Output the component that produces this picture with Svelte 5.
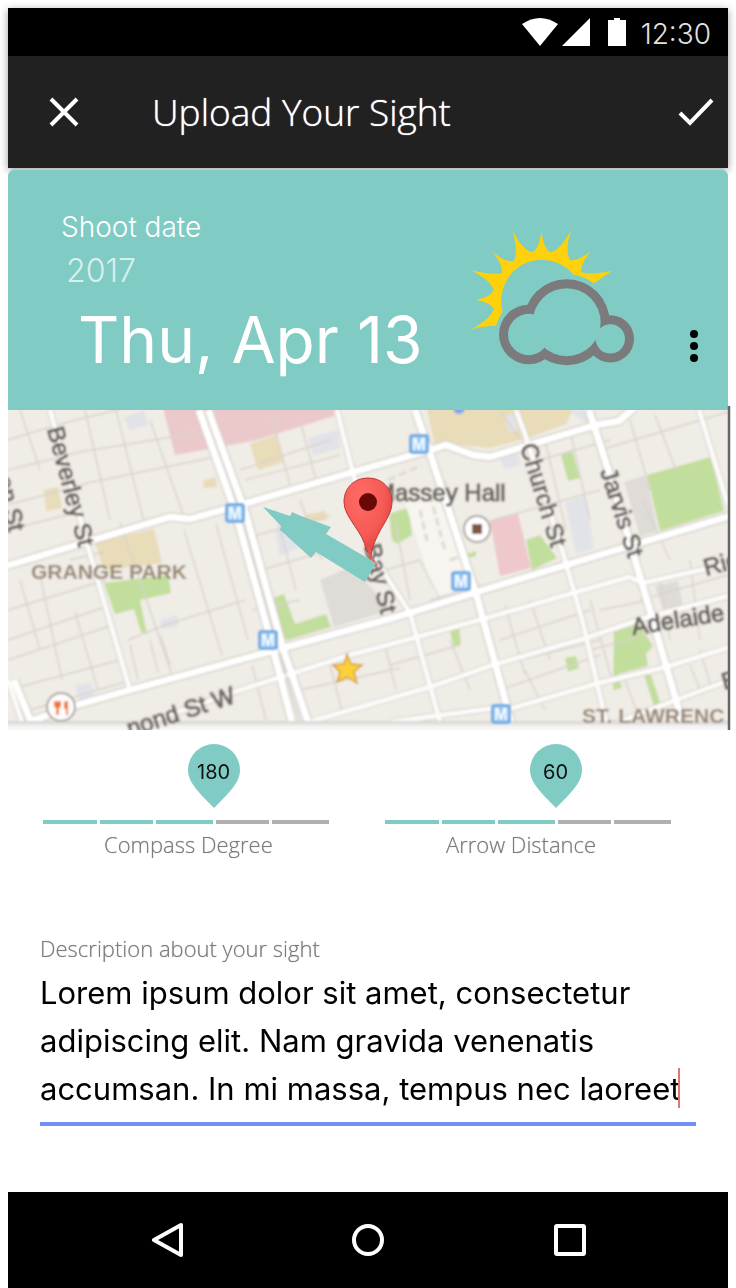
<script>
  let description = $state('Lorem ipsum dolor sit amet, consectetur adipiscing elit. Nam gravida venenatis accumsan. In mi massa, tempus nec laoreet');

  let sliders = $state([
    { id: 'compass', label: 'Compass Degree', value: 180, max: 300 },
    { id: 'distance', label: 'Arrow Distance', value: 60, max: 100 }
  ]);

  const segments = [1, 2, 3, 4, 5];

  // Streets, widest last so that they lie over the lanes
  const lanes = [
    'M8 440L60 424L230 382M8 470L80 452L215 430M8 505L92 482L225 455M8 530L70 514M8 610L106 580M8 640L108 606M8 660L110 626M8 690L120 660M30 710L125 682',
    'M85 410L110 520M116 410L144 522M20 410L40 470M20 580L40 650M40 575L62 680M75 612L98 690M120 522L150 610L172 675M150 420L184 517M184 530L222 655M216 524L248 640M128 640L165 625L245 600',
    'M70 560L104 552M130 645L138 680M150 640L158 672M160 635L170 665M270 410L290 485M300 420L316 480M245 480L340 455M240 470L330 440M250 537L330 515M262 570L345 545M275 510L296 590M300 500L322 560M395 520L410 600M385 570L420 560M252 610L300 600',
    'M252 665L266 720M330 665L343 715M385 645L396 690M300 690L400 668M430 600L480 585M420 560L440 600M450 640L470 690M390 665L460 645M500 410L520 440M545 440L566 530M570 430L590 520M493 520L600 490M540 460L610 440M630 420L650 490M655 415L676 470M600 450L728 412M642 500L670 560',
    'M505 605L525 675M530 600L550 660M500 640L590 610M520 660L600 640M525 670L545 710M600 610L650 600M590 650L655 632M660 580L670 640M690 560L700 640M640 600L728 575M690 665L702 695M625 680L640 720M700 650L712 690M660 540L728 520M590 600L612 680M500 690L600 655'
  ];
  const minor = [
    'M50 410L88 547L130 690',
    'M130 729L240 690L350 655L417 637L490 617L573 593L629 577L643 583L728 564',
    'M312 721L430 687L493 665L586 638L645 618L728 596',
    'M506 710L599 683L666 667L730 647',
    'M600 729L676 700L730 680',
    'M337 410L353 473L376 560L410 613L440 722',
    'M516 410L526 437L563 553L583 623L606 722',
    'M699 410L728 505',
    'M8 680L22 722',
    'M390 722L510 706'
  ];
  const major = [
    'M6 566L93 540L170 517L190 519L240 505L350 473L430 450L446 445L473 455L490 457L529 445L596 425L619 421L634 408',
    'M28 722L77 705L130 690L250 657L393 618L490 588L566 565L640 543L730 516',
    'M199 410L236 514L272 645L292 722',
    'M208 410L246 514L282 645L308 722',
    'M415 410L430 453L477 597L506 703L511 722',
    'M589 410L606 463L639 573L676 700L682 722',
    'M14 680L31 722'
  ];
  const metros = [[419, 444], [235, 513], [461, 581], [268, 640], [501, 714]];
</script>

<div class="screen">
  <div class="top">
    <div class="status">
      <svg width="104" height="28" viewBox="522 18 104 28" fill="#fff" aria-hidden="true">
        <path d="M522 24Q540 12 558 24L540 46Z" />
        <path d="M590 18V46H562Z" />
        <path d="M608 20H614V18H620V20H626V46H608Z" />
      </svg>
      <time>12:30</time>
    </div>
    <header>
      <button class="icon" aria-label="Close">
        <svg width="30" height="30" viewBox="0 0 30 30" fill="none" stroke="#fff" stroke-width="4"><path d="M2 2L28 28M28 2L2 28" /></svg>
      </button>
      <h1>Upload Your Sight</h1>
      <button class="icon" aria-label="Save">
        <svg width="36" height="28" viewBox="0 0 36 28" fill="none" stroke="#fff" stroke-width="4"><path d="M2 15L12 25L34 2" /></svg>
      </button>
    </header>
  </div>

  <section class="date">
    <div class="when">
      <span class="caption">Shoot date</span>
      <span class="year">2017</span>
      <span class="day">Thu, Apr 13</span>
    </div>
    <svg class="weather" width="165" height="137" viewBox="90 90 495 410" role="img" aria-label="Partly cloudy">
      <path fill="#fdd10c" d="M94 388Q150 358 162 326Q150 308 108 299Q150 292 161 270Q152 240 94 211Q152 224 185 219Q192 198 156 153Q195 188 222 182Q236 150 216 90Q250 152 277 156Q298 146 304 90Q310 146 332 156Q358 152 393 90Q374 150 390 180Q410 184 452 154Q418 196 425 216Q450 226 516 212L462 249Q430 228 400 223A122 122 0 0 0 184 300Q183 320 188 335Q175 355 168 377Q130 377 94 388Z" />
      <g fill="#7b7a7c"><circle cx="266" cy="403" r="89" /><circle cx="380" cy="366" r="129" /><circle cx="511" cy="416" r="71" /></g>
      <g fill="#80cbc4"><circle cx="266" cy="403" r="62" /><circle cx="380" cy="366" r="102" /><circle cx="511" cy="416" r="44" /></g>
    </svg>
    <button class="more" aria-label="More options">
      <svg width="8" height="32" viewBox="0 0 8 32"><circle cx="4" cy="4" r="4" /><circle cx="4" cy="16" r="4" /><circle cx="4" cy="28" r="4" /></svg>
    </button>
  </section>

  <svg class="map" viewBox="8 410 720 320" role="img" aria-label="Map of the sight">
    <defs>
      <filter id="soft" x="0" y="0" width="100%" height="100%"><feGaussianBlur stdDeviation="0.9" /></filter>
      <linearGradient id="fade" x1="0" y1="0" x2="0" y2="1">
        <stop offset="0" stop-color="#d5d2ce" /><stop offset="0.3" stop-color="#f6f6f6" /><stop offset="1" stop-color="#fefefe" />
      </linearGradient>
      <radialGradient id="pin" cx="0.35" cy="0.25" r="0.8">
        <stop offset="0" stop-color="#ff6b66" /><stop offset="0.6" stop-color="#f65a55" /><stop offset="1" stop-color="#d8403c" />
      </radialGradient>
      <clipPath id="frame"><rect x="8" y="410" width="720" height="320" /></clipPath>
    </defs>
    <g clip-path="url(#frame)">
      <g filter="url(#soft)">
        <rect x="0" y="400" width="740" height="340" fill="#f0ece6" />
        <path fill="#ebc9ca" d="M162 404H336L334 416L253 441L175 455Z" />
        <path fill="#e9dcb8" d="M250 444L276 435L284 462L258 470ZM44 490L58 487L62 508L46 511ZM203 481L216 477L217 487L204 488ZM426 404H576L566 424L528 438L490 448L450 444L436 452ZM304 515L325 511L327 520L306 523ZM95 543L154 529L162 563L104 570Z" />
        <path fill="#c2de9c" d="M104 583L168 575L171 593L140 600L147 634L141 632L134 609L115 614ZM273 598L284 594L295 624L326 614L331 627L288 640L283 638ZM389 514L418 504L420 515L410 518L412 535L397 544L392 540ZM450 631L459 627L461 644L454 647ZM561 455L572 450L580 478L568 481ZM647 475L711 457L724 511L660 531ZM526 540L540 535L557 558L532 570ZM614 629L639 624L653 646L646 654L648 666L618 674L622 688L613 690ZM565 658L576 656L579 668L568 672ZM644 675L650 672L660 702L654 706ZM467 554L476 551L476 556L468 558Z" />
        <path fill="#efc8cb" d="M490 520L518 514L531 568L500 576Z" />
        <path fill="#dfdbd7" d="M320 580L352 566L391 610L334 627ZM624 482L646 475L658 531L640 536ZM655 586L678 581L684 612L665 615Z" />
        <path fill="#e2e2e9" d="M565 502L585 496L594 548L576 554ZM308 438L338 430L340 448L313 456ZM500 458L518 454L520 466L504 469ZM505 415L514 414L518 430L509 433ZM569 410H589L588 424ZM275 530L296 524L299 548L280 556ZM75 685L92 682L94 698L80 702ZM124 418L144 410L148 425L130 430ZM160 620L178 615L178 626L163 629Z" />
        <path fill="#f8f5f1" d="M404 500L440 492L470 590L436 600Z" />
        <path fill="none" stroke="#ddd9d4" stroke-width="3" d="M430 495L445 550M420 510L428 545M388 480L422 465M444 480L452 510M450 560L462 556" stroke-dasharray="8 4" />
        {#each lanes as d}<path {d} fill="none" stroke="#d8d3cd" stroke-width="1.4" />{/each}
        {#each minor as d}<path {d} fill="none" stroke="#d6d1cb" stroke-width="7" />{/each}
        {#each major as d}<path {d} fill="none" stroke="#d2cdc7" stroke-width="9.5" stroke-linejoin="round" />{/each}
        {#each minor as d}<path {d} fill="none" stroke="#fcfbf9" stroke-width="5" />{/each}
        {#each major as d}<path {d} fill="none" stroke="#fff" stroke-width="7" stroke-linejoin="round" />{/each}
        <path fill="none" stroke="#d6d1cb" stroke-width="1.4" d="M204 410L241 514L277 645L300 722" />
        <circle cx="459" cy="408" r="6" fill="#84a6ea" />
        <rect x="0" y="721" width="740" height="20" fill="url(#fade)" />

        {#each metros as [x, y]}
          <rect x={x - 9} y={y - 9} width="18" height="18" rx="3" fill="#8fc5f4" stroke="#5fa3e0" stroke-width="2" />
          <text class="metro" {x} y={y + 6}>M</text>
        {/each}

        <g class="street">
          <text transform="translate(47 429) rotate(75)">Beverley St</text>
          <text transform="translate(-4 478) rotate(77)">on St</text>
          <text transform="translate(520 446) rotate(73)">Church St</text>
          <text transform="translate(600 471) rotate(72)">Jarvis St</text>
          <text transform="translate(364 546) rotate(76)">Bay St</text>
          <text transform="translate(130 737) rotate(-18)">nond St W</text>
          <text transform="translate(706 576) rotate(-15)">Rich</text>
          <text transform="translate(633 635) rotate(-9)">Adelaide</text>
          <text transform="translate(724 690) rotate(-15)">E</text>
          <text x="375" y="501">Massey Hall</text>
        </g>
        <g class="area">
          <text x="31" y="579">GRANGE PARK</text>
          <text x="582" y="723">ST. LAWRENC</text>
        </g>

        <circle cx="477" cy="529" r="13" fill="#fff" stroke="#aaa49e" stroke-width="2" />
        <rect x="472" y="524" width="10" height="10" fill="#805443" />
        <circle cx="61" cy="707" r="14" fill="#fdfcfb" stroke="#aaa49e" stroke-width="2" />
        <path fill="none" stroke="#ef782f" stroke-width="2" d="M55 701V706Q58 709 60 706V701M57.500 701V715M67 701V715" />
        <path fill="#ef782f" d="M54 702H61V707H58.500V715H56.500V707H54ZM64 702Q68 700 68 704V715H66V709H64Z" />
        <path fill="#fdd037" stroke="#d09a2a" stroke-width="1.400" d="M347 654L351 664L362 665L354 672L357 683L347 677L337 682L340 672L333 665L344 664Z" />
      </g>

      <path fill="url(#pin)" stroke="#b83a35" stroke-width="1" d="M368 478C382 478 392 488 392 502C392 519 375 530 371 556L366 550C364 532 344 518 344 502C344 488 354 478 368 478Z" />
      <circle cx="368" cy="502" r="9" fill="#6a0806" />
      <path fill="none" stroke="#e25550" stroke-width="3" d="M369 548L371 560" />
      <path fill="none" stroke="#e56f60" stroke-width="3" d="M372 558L376 566" />
      <path fill="#80cbc4" d="M263 507L290 516L292 512L301 516L331 527L326 534L376 563L365 582L316 552L311 558L288 537L280 530L281 526Z" />
    </g>
    <path d="M729 406V730" stroke="#666" stroke-width="2.500" />
  </svg>

  <section class="sliders">
    {#each sliders as s (s.id)}
      <div class="slider">
        <output for={s.id} style="left: {(s.value / s.max) * 100}%">
          <svg width="52" height="64" viewBox="0 0 52 64" fill="#80cbc4" aria-hidden="true"><path d="M26 0A26 26 0 0 1 52 26C52 38 42 48 26 64C10 48 0 38 0 26A26 26 0 0 1 26 0Z" /></svg>
          <span>{s.value}</span>
        </output>
        <div class="track">
          {#each segments as n}<i class:on={n / 5 <= s.value / s.max}></i>{/each}
          <input id={s.id} type="range" min="0" max={s.max} bind:value={s.value} />
        </div>
        <label for={s.id}>{s.label}</label>
      </div>
    {/each}
  </section>

  <section class="description">
    <label for="description">Description about your sight</label>
    <div class="field">
      <textarea id="description" rows="3" spellcheck="false" bind:value={description}></textarea>
      <span class="caret"></span>
    </div>
  </section>

  <nav>
    <button aria-label="Back"><svg width="36" height="36" viewBox="0 0 36 36"><path d="M31 3V33L4 18Z" /></svg></button>
    <button aria-label="Home"><svg width="36" height="36" viewBox="0 0 36 36"><circle cx="18" cy="18" r="14" /></svg></button>
    <button aria-label="Recent apps"><svg width="36" height="36" viewBox="0 0 36 36"><rect x="6" y="4" width="28" height="28" rx="1" /></svg></button>
  </nav>
</div>

<style>
  :global(body) { background: #fff; }

  .screen {
    display: flex;
    flex-direction: column;
    min-height: 100vh;
    box-sizing: border-box;
    padding: 8px 8px 0;
    font-family: Inter, sans-serif;
    overflow: hidden;
  }
  button { border: 0; padding: 0; background: none; display: grid; place-items: center; cursor: pointer; }
  svg { display: block; }

  .top { box-shadow: 0 2px 8px rgba(0, 0, 0, 0.4); margin-bottom: 2px; }
  .status {
    display: flex;
    justify-content: flex-end;
    align-items: flex-start;
    gap: 15px;
    height: 48px;
    padding-right: 17px;
    background: #000;
  }
  .status svg { margin-top: 10px; }
  .status time { color: #e2e2e2; font-size: 28px; font-weight: 340; line-height: 52px; }
  header {
    display: flex;
    align-items: center;
    height: 112px;
    padding: 0 14px 0 41px;
    background: #212121;
  }
  header .icon { height: 48px; }
  h1 {
    flex: 1;
    margin: 0 0 0 73px;
    color: #fff;
    font: 300 37px/56px "Open Sans", sans-serif;
    text-shadow: 0 0 1px #fff;
  }

  .date {
    display: flex;
    align-items: flex-start;
    height: 240px;
    background: #80cbc4;
    border-radius: 6px 6px 0 0;
    color: #fff;
  }
  .when { flex: 1; display: flex; flex-direction: column; padding: 36px 0 0 53px; }
  .caption { font-size: 28px; font-weight: 350; line-height: 42px; }
  .year { padding-left: 5px; font-size: 32px; font-weight: 350; line-height: 46px; opacity: 0.7; }
  .day { padding-left: 17px; font-size: 64px; line-height: 92px; white-space: nowrap; }
  .weather { margin-top: 60px; }
  .more { width: 40px; height: 48px; margin: 152px 14px 0 39px; }

  .map { width: 100%; height: auto; overflow: visible; }
  .metro { font: bold 16px "Liberation Sans", sans-serif; fill: #fff; text-anchor: middle; }
  .street { font: 24px "Liberation Sans", sans-serif; fill: #6c6561; stroke: #6c6561; stroke-width: 1px; }
  .area { font: bold 21px "Liberation Sans", sans-serif; fill: #978673; }

  .sliders {
    display: grid;
    grid-template-columns: 1fr 1fr;
    gap: 56px;
    padding: 14px 57px 0 35px;
  }
  .slider { position: relative; padding-top: 76px; display: flex; flex-direction: column; align-items: flex-start; }
  output { position: absolute; top: 0; margin-left: -27px; color: #111; font-size: 20px; }
  output span { position: absolute; inset: 0 0 8px; display: grid; place-items: center; }
  .track { position: relative; display: grid; grid-template-columns: 54fr 53fr 57fr 53fr 57fr; gap: 3px; width: 100%; height: 4px; }
  .track i { background: #b0b0b0; }
  .track i.on { background: #80cbc4; }
  .track input { position: absolute; inset: -10px 0; width: 100%; height: 24px; margin: 0; opacity: 0; }
  label { color: #7c7c7c; font: 300 22px/32px "Open Sans", sans-serif; text-shadow: 0 0 1px #aaa; }
  .slider label { margin-top: 4px; padding-left: 61px; }

  .description { padding: 72px 32px 0; display: flex; flex-direction: column; }
  .field { position: relative; display: flex; border-bottom: 4px solid #6f8ff5; padding: 5px 0 9px; }
  textarea {
    width: 100%;
    border: 0;
    margin: 0;
    padding: 0;
    resize: none;
    outline: none;
    overflow: hidden;
    background: none;
    color: #000;
    font: 400 31px/48px Inter, sans-serif;
    caret-color: #e57373;
  }
  .caret { position: absolute; right: 16px; bottom: 14px; width: 2px; height: 40px; background: #e57373; }

  nav { display: flex; justify-content: center; height: 96px; margin-top: auto; background: #000; }
  nav button { width: 200px; }
  nav svg { fill: none; stroke: #fff; stroke-width: 4; stroke-linejoin: round; }
</style>
